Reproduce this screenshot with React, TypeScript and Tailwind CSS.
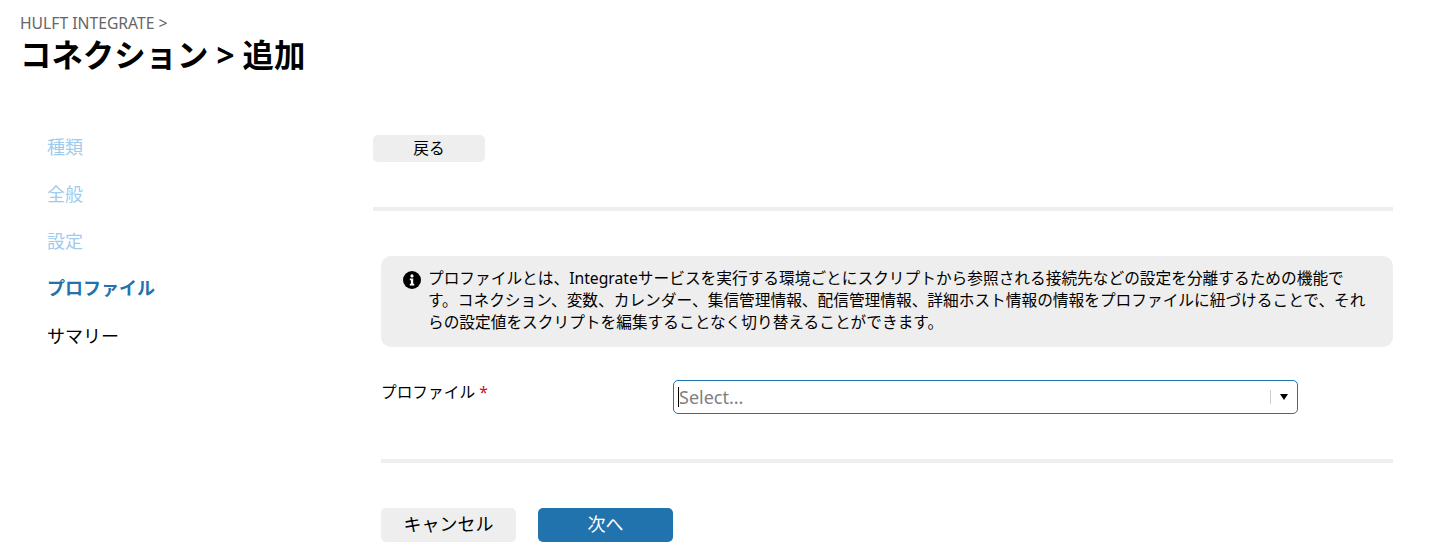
const font = "font-['Noto_Sans','Noto_Sans_CJK_JP',sans-serif]";

const steps = [
  { label: "種類", color: "text-[#9ecbee]" },
  { label: "全般", color: "text-[#9ecbee]" },
  { label: "設定", color: "text-[#9ecbee]" },
  { label: "プロファイル", color: "text-[#2173ae] font-bold" },
  { label: "サマリー", color: "text-black" },
];

function InfoIcon() {
  return (
    <svg viewBox="0 0 18 18" className="w-[18px] h-[18px] shrink-0 mt-[5px]">
      <circle cx="9" cy="9" r="9" fill="#000" />
      <circle cx="9" cy="4.9" r="1.6" fill="#fff" />
      <path d="M6.8 7.6h3.4v5.2h1.1v1.6H6.8v-1.6h1.1V9.2H6.8z" fill="#fff" />
    </svg>
  );
}

export default function App() {
  return (
    <div className={`${font} w-[1444px] h-[558px] overflow-hidden bg-white text-black`}>
      {/* HEADER */}
      <div className="pl-5 pt-[13px] h-[135px]">
        <div className="text-[15.7px] leading-[21px] text-[#666]">HULFT INTEGRATE &gt;</div>
        <h1 className="text-[31.4px] leading-[42px] font-bold">コネクション &gt; 追加</h1>
      </div>

      <div className="flex">
        {/* STEPS */}
        <div className="w-[373px] shrink-0 pl-[47px] flex flex-col">
          {steps.map((s) => (
            <div key={s.label} className={`h-[47.13px] text-[18px] leading-[25px] ${s.color}`}>
              {s.label}
            </div>
          ))}
        </div>

        {/* MAIN */}
        <div className="w-[1020px]">
          <button className="block w-[112px] h-[27px] bg-[#eeeeee] rounded-[5px] text-[15.7px] leading-[27px] text-center">
            戻る
          </button>
          <div className="h-1 bg-[#eeeeee] mt-[45px]" />

          <div className="ml-2 mt-[45px]">
            <div className="flex gap-[7px] h-[91px] bg-[#eeeeee] rounded-[10px] pl-[22px] pr-5 pt-[10px]">
              <InfoIcon />
              <p className="text-[15.7px] leading-[22.2px] pt-[0.6px] w-[945px]">
                プロファイルとは、Integrateサービスを実行する環境ごとにスクリプトから参照される接続先などの設定を分離するための機能です。コネクション、変数、カレンダー、集信管理情報、配信管理情報、詳細ホスト情報の情報をプロファイルに紐づけることで、それらの設定値をスクリプトを編集することなく切り替えることができます。
              </p>
            </div>

            <div className="flex mt-[33px]">
              <label className="w-[292px] text-[15.7px] leading-[24px]">
                プロファイル <span className="text-[#c8102e]">*</span>
              </label>
              <div className="w-[625px] h-[34px] border border-[#2173ae] rounded-[5px] flex items-center pl-[5px] pr-[9px]">
                <div className="w-px h-5 bg-black -ml-px" />
                <span className="flex-1 text-[18px] leading-[24px] text-[#808080]">Select...</span>
                <div className="w-px h-[14px] bg-[#cccccc]" />
                <svg viewBox="0 0 8 6" className="w-2 h-[6px] ml-[9px]">
                  <path d="M0 0h8L4 6z" fill="#000" />
                </svg>
              </div>
            </div>

            <div className="h-1 bg-[#eeeeee] mt-[45px]" />

            <div className="flex gap-[22px] mt-[45px]">
              <button className="w-[135px] h-[34px] bg-[#eeeeee] rounded-[5px] text-[18px] leading-[32px] pb-[2px] text-center">
                キャンセル
              </button>
              <button className="w-[135px] h-[34px] bg-[#2173ae] rounded-[5px] text-white text-[18px] leading-[32px] pb-[2px] text-center">
                次へ
              </button>
            </div>
          </div>
        </div>
      </div>
    </div>
  );
}
